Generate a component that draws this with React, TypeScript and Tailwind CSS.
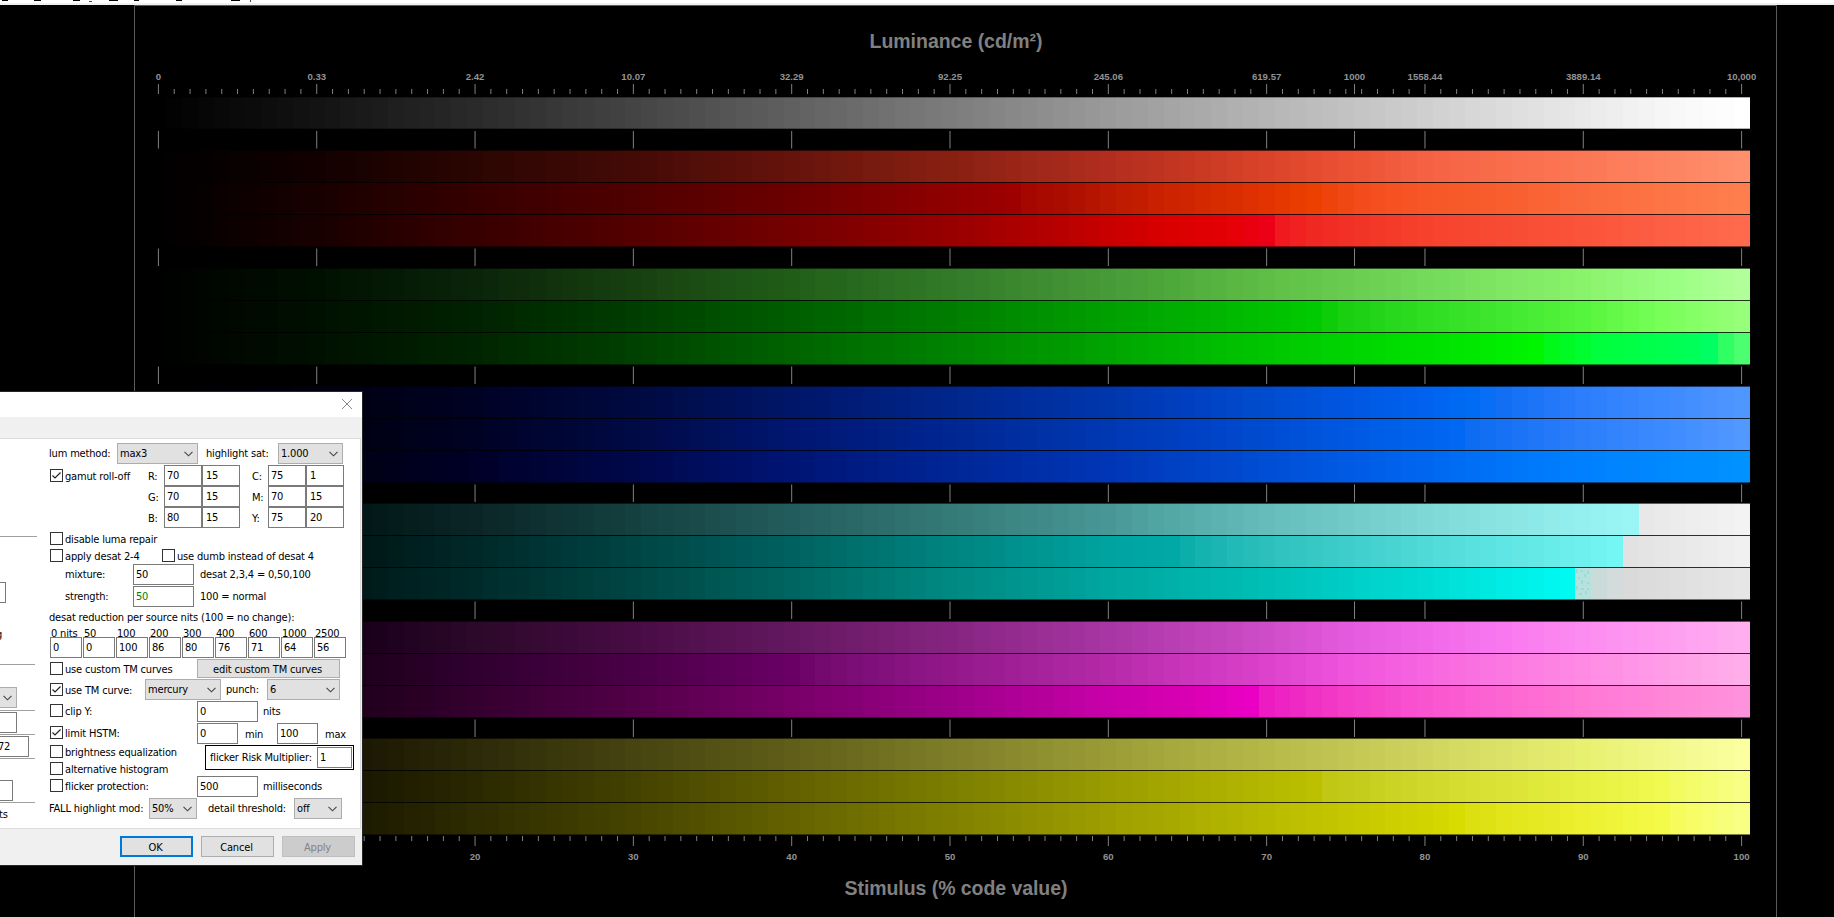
import clsx from "clsx";
import type { ReactNode } from "react";

type Stop = [number, string];

const X0 = 158.4;
const STEP = 15.832;
const AXIS = "#808080";

const px = (percent: number) => X0 + percent * STEP;

const GRAY: Stop[] = [[0, "#000000"], [10, "#131313"], [20, "#2a2a2a"], [30, "#444444"], [40, "#606060"], [50, "#7c7c7c"], [60, "#9a9a9a"], [70, "#b5b5b5"], [80, "#cfcfcf"], [90, "#e9e9e9"], [96, "#f8f8f8"], [100, "#ffffff"]];

const GROUPS: { y: number; bars: Stop[][] }[] = [
  {
    y: 150,
    bars: [
      [[0, "#000000"], [10, "#120000"], [20, "#2b0502"], [30, "#440a06"], [40, "#66130c"], [50, "#882012"], [60, "#b22d1f"], [64, "#c23520"], [70, "#da4329"], [75, "#eb5133"], [80, "#f56143"], [85, "#f96d4b"], [90, "#fc7755"], [100, "#ff8f6d"]],
      [[0, "#000000"], [10, "#180000"], [20, "#360000"], [30, "#500000"], [40, "#6c0000"], [50, "#8f0000"], [54, "#9e0000"], [55, "#a60600"], [57, "#aa0d00"], [60, "#ba1800"], [63, "#c82000"], [70, "#e23300"], [73, "#ec4000"], [74, "#ee440c"], [77, "#f54f1f"], [80, "#f75626"], [85, "#f95e2e"], [90, "#fb6a3c"], [100, "#ff7e4e"]],
      [[0, "#000000"], [10, "#180000"], [20, "#370000"], [30, "#540000"], [40, "#740000"], [50, "#980000"], [57, "#b80000"], [60, "#c80000"], [64, "#da0000"], [68, "#e60007"], [70, "#eb0018"], [71, "#f01a1e"], [73, "#f02822"], [77, "#f33828"], [80, "#f6422d"], [90, "#fa543a"], [100, "#ff6a4d"]],
    ],
  },
  {
    y: 268,
    bars: [
      [[0, "#000000"], [10, "#001000"], [20, "#0a240a"], [30, "#174010"], [40, "#205e18"], [50, "#327a28"], [60, "#479a38"], [63, "#4ba539"], [70, "#5fbe46"], [80, "#73da5a"], [90, "#8af36c"], [96, "#9cff85"], [100, "#b0ff98"]],
      [[0, "#000000"], [10, "#001000"], [20, "#002200"], [30, "#003d00"], [40, "#005e00"], [50, "#007d00"], [60, "#00a000"], [70, "#00c000"], [73, "#00ca00"], [75, "#18cf10"], [78, "#28d81c"], [85, "#40e82f"], [90, "#56f53d"], [95, "#78ff58"], [100, "#98ff7a"]],
      [[0, "#000000"], [10, "#001000"], [20, "#002400"], [30, "#004000"], [40, "#006300"], [50, "#008300"], [60, "#00a400"], [63, "#00b000"], [70, "#00c600"], [75, "#00d400"], [80, "#00e000"], [85, "#00ee00"], [87, "#00f500"], [88, "#00f918"], [91, "#00ff3c"], [97, "#00ff58"], [98, "#00ff62"], [99, "#30ff64"], [100, "#4bff70"]],
    ],
  },
  {
    y: 386,
    bars: [
      [[0, "#000000"], [13, "#000014"], [20, "#000224"], [30, "#000a40"], [40, "#001668"], [50, "#00268c"], [60, "#0036ac"], [65, "#0040c0"], [70, "#004ccf"], [75, "#0056e0"], [80, "#0062ee"], [83, "#006cf4"], [84, "#086ef6"], [85, "#126ff4"], [90, "#2c7efc"], [95, "#3c8aff"], [100, "#5096ff"]],
      [[0, "#000000"], [13, "#000014"], [20, "#000224"], [30, "#000a44"], [40, "#001670"], [50, "#002692"], [60, "#0038b2"], [65, "#0040c4"], [70, "#004cd0"], [75, "#0058e2"], [82, "#0068f2"], [83, "#0e6cf2"], [90, "#2c7efa"], [95, "#3c8aff"], [100, "#5298ff"]],
      [[0, "#000000"], [13, "#000016"], [20, "#000028"], [30, "#00084a"], [40, "#001474"], [50, "#002696"], [60, "#0036b6"], [65, "#0042c6"], [70, "#004ed4"], [75, "#005ae4"], [80, "#0066f0"], [85, "#0074f8"], [90, "#0080ff"], [100, "#0092ff"]],
    ],
  },
  {
    y: 503,
    bars: [
      [[0, "#000000"], [13, "#021818"], [20, "#0b2526"], [30, "#144040"], [40, "#235c5c"], [50, "#347a77"], [60, "#489796"], [64, "#53a8a6"], [70, "#65bcba"], [80, "#7ed8d6"], [90, "#94f0ee"], [93, "#9af6f4"], [94, "#e8e8e8"], [100, "#f3f3f3"]],
      [[0, "#000000"], [13, "#001818"], [20, "#002828"], [30, "#004444"], [40, "#006260"], [50, "#008480"], [60, "#00a3a0"], [64, "#00a8a6"], [66, "#15b3b0"], [70, "#2cc0bc"], [80, "#4fdad8"], [90, "#6ef0ee"], [92, "#74f6f4"], [93, "#e2e2e2"], [100, "#f0f0f0"]],
      [[0, "#000000"], [13, "#001a1a"], [20, "#002a2a"], [30, "#004644"], [40, "#006560"], [50, "#008882"], [60, "#00a6a0"], [70, "#00bfb6"], [75, "#00cec6"], [80, "#00dcd4"], [85, "#00ece4"], [89, "#00faf2"], [90, "#b8e0dc"], [91, "#cbdbda"], [92, "#d4dcdb"], [93, "#dadada"], [100, "#e6e6e6"]],
    ],
  },
  {
    y: 621,
    bars: [
      [[0, "#000000"], [13, "#1a001a"], [20, "#2c082a"], [30, "#470c44"], [40, "#641860"], [50, "#852480"], [60, "#a836a4"], [63, "#b43cb0"], [70, "#cf4cc8"], [75, "#e45ade"], [80, "#f068e8"], [85, "#f978f0"], [90, "#fc8cf0"], [100, "#ffaef0"]],
      [[0, "#000000"], [13, "#1e001c"], [20, "#300030"], [30, "#4a0046"], [40, "#6a0066"], [42, "#740a70"], [50, "#92188a"], [60, "#b42aa8"], [64, "#c632b8"], [70, "#dc42cc"], [75, "#ee54dc"], [80, "#f766e0"], [90, "#ff8ae4"], [100, "#ffaeea"]],
      [[0, "#000000"], [13, "#20001c"], [20, "#34002e"], [30, "#520048"], [40, "#780068"], [50, "#9c0088"], [60, "#c800aa"], [65, "#d800b2"], [69, "#ea00c4"], [70, "#ec1cc2"], [75, "#f43ec8"], [80, "#f954d0"], [90, "#ff78d4"], [100, "#ff92dc"]],
    ],
  },
  {
    y: 738,
    bars: [
      [[0, "#000000"], [13, "#1c1804"], [20, "#2c2a08"], [30, "#464410"], [40, "#605e18"], [50, "#7e7d28"], [60, "#9b9c36"], [63, "#a4a63c"], [70, "#b6b848"], [80, "#d0d45e"], [90, "#e8f070"], [100, "#fbffa0"]],
      [[0, "#000000"], [13, "#1a1800"], [20, "#2a2800"], [30, "#444200"], [40, "#626000"], [50, "#7c7e00"], [60, "#9a9c00"], [63, "#a2a400"], [70, "#b4b800"], [73, "#bcc000"], [74, "#c0c814"], [80, "#d0d82c"], [90, "#e6f040"], [95, "#f0fa50"], [96, "#f2fc60"], [100, "#f8ff84"]],
      [[0, "#000000"], [13, "#1c1a00"], [20, "#2e2c00"], [30, "#464400"], [40, "#646200"], [50, "#808000"], [60, "#9e9e00"], [70, "#b8ba00"], [80, "#d2d400"], [82, "#d8dc00"], [83, "#dce010"], [90, "#ecf030"], [95, "#f4fa48"], [96, "#f5fc5c"], [100, "#f8ff84"]],
    ],
  },
];

const NITS: Stop[] = [[0, "0"], [10, "0.33"], [20, "2.42"], [30, "10.07"], [40, "32.29"], [50, "92.25"], [60, "245.06"], [70, "619.57"], [75.55, "1000"], [80, "1558.44"], [90, "3889.14"], [100, "10,000"]];

const PERCENTS = Array.from({ length: 101 }, (_, i) => i);

function channels(hex: string) {
  return [1, 3, 5].map((i) => parseInt(hex.slice(i, i + 2), 16));
}

function colorAt(stops: Stop[], percent: number) {
  const next = Math.max(1, stops.findIndex(([p]) => p >= percent));
  const [p0, c0] = stops[next - 1];
  const [p1, c1] = stops[next];
  const t = (percent - p0) / (p1 - p0);
  const a = channels(c0);
  const b = channels(c1);
  return `rgb(${a.map((v, i) => Math.round(v + (b[i] - v) * t)).join(",")})`;
}

function Bar({ y, height, stops }: { y: number; height: number; stops: Stop[] }) {
  return (
    <g shapeRendering="crispEdges">
      {PERCENTS.map((p) => (
        <rect key={p} x={Math.round(px(p - 0.5))} y={y} width={17} height={height} fill={colorAt(stops, p)} />
      ))}
    </g>
  );
}

function Shade({ y, opacity }: { y: number; opacity: number }) {
  return <rect x="150" y={y} width="1600" height="1" fill="#000" opacity={opacity} />;
}

function MajorTicks({ y, height }: { y: number; height: number }) {
  return (
    <>
      {NITS.map(([p]) => (
        <rect key={p} x={px(p) - 0.5} y={y} width={1} height={height} fill={AXIS} />
      ))}
    </>
  );
}

function MinorTicks({ y }: { y: number }) {
  return (
    <>
      {PERCENTS.filter((p) => p % 10).map((p) => (
        <rect key={p} x={px(p) - 0.5} y={y} width={1} height={5} fill={AXIS} />
      ))}
    </>
  );
}

function Chart() {
  return (
    <svg width="1834" height="912" viewBox="0 5 1834 912" className="block bg-black font-['Liberation_Sans'] font-bold">
      <path d="M134.5 917V5.5H1776.5V917" fill="none" stroke="#5a5a5a" />

      <text x="956" y="48" textAnchor="middle" fontSize="19.5" fill={AXIS} textLength="173">Luminance (cd/m²)</text>
      {NITS.map(([p, label]) => (
        <text key={p} x={px(p)} y="80" textAnchor="middle" fontSize="9.6" fill="#929292">{label}</text>
      ))}
      <MajorTicks y={84} height={10} />
      <MinorTicks y={89} />

      <Bar y={97} height={32} stops={GRAY} />
      <Shade y={97} opacity={0.3} />
      <Shade y={128} opacity={0.3} />
      <MajorTicks y={131} height={17.5} />

      {GROUPS.map(({ y, bars }) => (
        <g key={y}>
          {bars.map((stops, i) => (
            <Bar key={i} y={y + i * 32} height={33} stops={stops} />
          ))}
          <Shade y={y} opacity={0.6} />
          <Shade y={y + 32} opacity={0.8} />
          <Shade y={y + 64} opacity={0.8} />
          <Shade y={y + 96} opacity={0.5} />
          {y < 700 && <MajorTicks y={y + 98.5} height={17.5} />}
        </g>
      ))}
      {/* the last sliver of clipping noise in the cyan ramp */}
      <path d="M1577 569v4M1580 571h3M1585 574v3M1578 578h2M1588 571v3M1582 580v4M1587 583h2M1577 586v4M1581 589h3M1586 591v3M1579 594h3M1588 588v2" stroke="#4ce8e0" opacity="0.8" fill="none" />
      <rect x="1750" y="90" width="4" height="750" fill="#000" />

      {PERCENTS.filter((p) => p % 10 === 0).map((p) => (
        <g key={p}>
          <rect x={px(p) - 0.5} y={836} width={1} height={10} fill={AXIS} />
          <text x={px(p)} y="859.5" textAnchor="middle" fontSize="9.6" fill="#929292">{p}</text>
        </g>
      ))}
      <MinorTicks y={836} />
      <text x="956" y="894.5" textAnchor="middle" fontSize="19.5" fill={AXIS} textLength="223">Stimulus (% code value)</text>
    </svg>
  );
}

function Label({ className, children }: { className?: string; children: ReactNode }) {
  return <span className={clsx("-indent-px block shrink-0 whitespace-nowrap leading-[15px]", className)}>{children}</span>;
}

function Check({ checked, className }: { checked?: boolean; className?: string }) {
  return (
    <span className={clsx("block size-[13px] shrink-0 border border-[#333] bg-white", className)}>
      {checked && (
        <svg viewBox="0 0 11 11" className="block size-[11px]" fill="none" stroke="#222" strokeWidth="1.2">
          <path d="M1.500 5.5 4 8 9.5 2.5" />
        </svg>
      )}
    </span>
  );
}

function Field({ className, children }: { className?: string; children?: ReactNode }) {
  return (
    <span className={clsx("block h-[21px] shrink-0 border border-[#7a7a7a] bg-white pl-[2px] leading-[20px]", className)}>
      {children}
    </span>
  );
}

function Select({ className, children }: { className?: string; children?: ReactNode }) {
  return (
    <span className={clsx("flex h-[21px] shrink-0 items-center justify-between border border-[#adadad] bg-[#e1e1e1] pr-1 pl-[2px]", className)}>
      <span className="pt-[2px]">{children}</span>
      <svg viewBox="0 0 9 6" className="h-[6px] w-[9px]" fill="none" stroke="#444" strokeWidth="1.1">
        <path d="M.5.8 4.5 4.8 8.5.8" />
      </svg>
    </span>
  );
}

function Row({ className, children }: { className?: string; children: ReactNode }) {
  return <div className={clsx("flex shrink-0 items-start", className)}>{children}</div>;
}

const GAMUT = [
  ["R:", "70", "15", "C:", "75", "1"],
  ["G:", "70", "15", "M:", "70", "15"],
  ["B:", "80", "15", "Y:", "75", "20"],
];

const DESAT = [["0 nits", "0"], ["50", "0"], ["100", "100"], ["200", "86"], ["300", "80"], ["400", "76"], ["600", "71"], ["1000", "64"], ["2500", "56"]];

function LeftColumn() {
  return (
    <div className="flex w-[50px] shrink-0 flex-col items-start overflow-hidden">
      <div className="mt-[97px] h-px w-[37px] bg-[#a0a0a0]" />
      <Field className="mt-[45px] w-[6px] border-l-0" />
      <Label className="mt-[24px] -ml-[3px] h-[13px]">g</Label>
      <div className="mt-[24px] h-px w-[35px] bg-[#a0a0a0]" />
      <Select className="mt-[22px] w-[17px] border-l-0 pl-0" />
      <div className="mt-[2px] h-px w-[35px] bg-[#a0a0a0]" />
      <Field className="mt-px w-[17px] border-l-0" />
      <div className="mt-px h-px w-[35px] bg-[#a0a0a0]" />
      <Field className="mt-px w-[29px] border-l-0 pl-0"><span className="-ml-[4px]">72</span></Field>
      <div className="mt-px h-px w-[35px] bg-[#a0a0a0]" />
      <Field className="mt-[21px] w-[13px] border-l-0" />
      <div className="mt-px h-px w-[35px] bg-[#a0a0a0]" />
      <Label className="mt-[4px]">ts</Label>
    </div>
  );
}

function Settings() {
  return (
    <div className="flex flex-col pt-[4px]">
      <Row className="h-[22px]">
        <Label className="mt-[3px] w-[67px]">lum method:</Label>
        <Select className="w-[81px]">max3</Select>
        <Label className="mt-[3px] ml-[9px] w-[71px]">highlight sat:</Label>
        <Select className="w-[65px]">1.000</Select>
      </Row>

      <Row className="h-[63px]">
        <Check checked className="mt-[4px]" />
        <Label className="mt-[4px] ml-[3px] w-[83px]">gamut roll-off</Label>
        <div>
          {GAMUT.map(([a, a1, a2, b, b1, b2]) => (
            <Row key={a}>
              <Label className="mt-[4px] w-[15px]">{a}</Label>
              <Field className="w-[38px]">{a1}</Field>
              <Field className="w-[38px] pl-[3px]">{a2}</Field>
              <Label className="mt-[4px] ml-[13px] w-[15px]">{b}</Label>
              <Field className="w-[38px]">{b1}</Field>
              <Field className="w-[38px] pl-[3px]">{b2}</Field>
            </Row>
          ))}
        </div>
      </Row>

      <Row className="h-[21px] pt-[4px]">
        <Check />
        <Label className="ml-[3px]">disable luma repair</Label>
      </Row>
      <Row className="h-[15px]">
        <Check />
        <Label className="ml-[3px] w-[96px]">apply desat 2-4</Label>
        <Check />
        <Label className="ml-[3px]">use dumb instead of desat 4</Label>
      </Row>
      <Row className="h-[22px]">
        <Label className="mt-[3px] ml-[16px] w-[67px]">mixture:</Label>
        <Field className="w-[61px]">50</Field>
        <Label className="mt-[3px] ml-[7px]">desat 2,3,4 = 0,50,100</Label>
      </Row>
      <Row className="h-[22px]">
        <Label className="mt-[3px] ml-[16px] w-[67px]">strength:</Label>
        <Field className="w-[61px] text-[#008000]">50</Field>
        <Label className="mt-[3px] ml-[7px]">100 = normal</Label>
      </Row>
      <Row className="h-[18px] pt-[2px]">
        <Label>desat reduction per source nits (100 = no change):</Label>
      </Row>

      <Row className="h-[33px] gap-px">
        {DESAT.map(([nits, value]) => (
          <div key={nits} className="flex w-[32px] flex-col">
            <Label className="h-[11px] pl-[2px] leading-[12px]">{nits}</Label>
            <Field>{value}</Field>
          </div>
        ))}
      </Row>

      <Row className="h-[20px]">
        <Check className="mt-[3px]" />
        <Label className="mt-[3px] ml-[3px] w-[131px]">use custom TM curves</Label>
        <span className="h-[19px] w-[143px] border border-[#adadad] bg-[#e1e1e1] pr-[2px] text-center leading-[19px]">edit custom TM curves</span>
      </Row>
      <Row className="h-[22px]">
        <Check checked className="mt-[4px]" />
        <Label className="mt-[4px] ml-[3px] w-[79px]">use TM curve:</Label>
        <Select className="w-[76px]">mercury</Select>
        <Label className="mt-[3px] ml-[6px] w-[40px]">punch:</Label>
        <Select className="w-[73px]">6</Select>
      </Row>
      <Row className="h-[22px]">
        <Check className="mt-[3px]" />
        <Label className="mt-[3px] ml-[3px] w-[131px]">clip Y:</Label>
        <Field className="w-[61px]">0</Field>
        <Label className="mt-[3px] ml-[6px]">nits</Label>
      </Row>
      <Row className="h-[22px]">
        <Check checked className="mt-[3px]" />
        <Label className="mt-[3px] ml-[3px] w-[131px]">limit HSTM:</Label>
        <Field className="w-[41px]">0</Field>
        <Label className="mt-[4px] ml-[8px] w-[31px]">min</Label>
        <Field className="w-[41px]">100</Field>
        <Label className="mt-[4px] ml-[8px]">max</Label>
      </Row>
      <Row className="h-[31px]">
        <div className="w-[155px]">
          <Row className="h-[17px]">
            <Check />
            <Label className="ml-[3px]">brightness equalization</Label>
          </Row>
          <Row>
            <Check />
            <Label className="ml-[3px]">alternative histogram</Label>
          </Row>
        </div>
        <Row className="h-[25px] w-[149px] border border-black pt-px">
          <Label className="mt-[3px] ml-[5px] w-[106px]">flicker Risk Multiplier:</Label>
          <Field className="w-[35px]">1</Field>
        </Row>
      </Row>
      <Row className="h-[22px]">
        <Check className="mt-[3px]" />
        <Label className="mt-[3px] ml-[3px] w-[131px]">flicker protection:</Label>
        <Field className="w-[61px]">500</Field>
        <Label className="mt-[3px] ml-[6px]">milliseconds</Label>
      </Row>
      <Row className="h-[22px]">
        <Label className="mt-[3px] w-[99px]">FALL highlight mod:</Label>
        <Select className="w-[48px]">50%</Select>
        <Label className="mt-[3px] ml-[12px] w-[85px]">detail threshold:</Label>
        <Select className="w-[48px]">off</Select>
      </Row>
    </div>
  );
}

function Dialog() {
  return (
    <div className="absolute top-[391px] left-0 flex h-[475px] w-[363px] flex-col border border-l-0 border-[#262626] bg-[#f0f0f0] font-['DejaVu_Sans_Condensed','DejaVu_Sans',sans-serif] text-[11px] tracking-[-0.17px] text-black">
      <div className="flex h-[25px] shrink-0 items-center justify-end bg-white pr-[10px]">
        <svg viewBox="0 0 10 10" className="mb-px size-[10px]" stroke="#888" strokeWidth="1">
          <path d="M0 0 10 10M10 0 0 10" />
        </svg>
      </div>
      <div className="mt-[21px] mr-px flex h-[391px] shrink-0 border-y border-r border-[#dcdcdc] bg-white">
        <LeftColumn />
        <Settings />
      </div>
      <div className="flex gap-2 pt-[7px] pl-[120px] text-center leading-[21px]">
        <span className="h-[21px] w-[73px] border-2 border-[#0078d7] bg-[#e1e1e1] pr-[2px] leading-[19px]">OK</span>
        <span className="h-[21px] w-[73px] border border-[#adadad] bg-[#e1e1e1] pr-[2px]">Cancel</span>
        <span className="h-[21px] w-[73px] border border-[#bfbfbf] bg-[#ccc] pr-[2px] text-[#838383]">Apply</span>
      </div>
    </div>
  );
}

export default function App() {
  return (
    <main className="relative h-[917px] w-[1834px] overflow-hidden bg-black">
      <div className="h-[5px] border-b-2 border-[#f0f0f0] bg-white">
        {/* bottoms of the underscored menu letters */}
        <svg width="280" height="3" className="block">
          <path d="M2 .5h6M34 .5h7M73 .5h7M109 .5h9M134 .5h5M176 .5h6M231 .5h9" stroke="#000" />
          <path d="M89 1.5h3M250.5 0v2" stroke="#444" />
        </svg>
      </div>
      <Chart />
      <Dialog />
    </main>
  );
}
